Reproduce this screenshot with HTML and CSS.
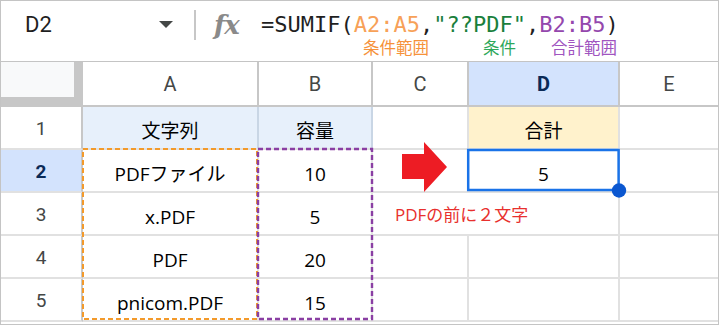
FILE: index.html
```html
<!DOCTYPE html>
<html>
<head>
    <meta charset="utf-8">
    <link rel="stylesheet" href="styles.css">
</head>
<body>
    <div class="sheet">
        <div class="formula-bar">
            <div class="name-box">
                <span class="cell-ref">D2</span>
                <span class="caret"></span>
            </div>
            <div class="divider"></div>
            <div class="fx">fx</div>
            <div class="formula">
                <div class="formula-text">=SUMIF(<span class="ref-a">A2:A5</span>,<span class="crit">"??PDF"</span>,<span class="ref-b">B2:B5</span>)</div>
                <div class="notes">
                    <span class="note note-a">条件範囲</span>
                    <span class="note note-c">条件</span>
                    <span class="note note-b">合計範囲</span>
                </div>
            </div>
        </div>

        <div class="grid">
            <div class="corner"><div class="corner-inner"></div></div>
            <div class="col-head">A</div>
            <div class="col-head">B</div>
            <div class="col-head">C</div>
            <div class="col-head active">D</div>
            <div class="col-head last">E</div>

            <div class="row-head">1</div>
            <div class="cell title">文字列</div>
            <div class="cell title">容量</div>
            <div class="cell"></div>
            <div class="cell total">合計</div>
            <div class="cell last"></div>

            <div class="row-head active">2</div>
            <div class="cell">PDFファイル</div>
            <div class="cell">10</div>
            <div class="cell"></div>
            <div class="cell">5</div>
            <div class="cell last"></div>

            <div class="row-head">3</div>
            <div class="cell">x.PDF</div>
            <div class="cell">5</div>
            <div class="cell note-cell">PDFの前に２文字</div>
            <div class="cell last"></div>

            <div class="row-head">4</div>
            <div class="cell">PDF</div>
            <div class="cell">20</div>
            <div class="cell"></div>
            <div class="cell"></div>
            <div class="cell last"></div>

            <div class="row-head">5</div>
            <div class="cell">pnicom.PDF</div>
            <div class="cell">15</div>
            <div class="cell"></div>
            <div class="cell"></div>
            <div class="cell last"></div>
        </div>

        <!-- range highlights, arrow and selection drawn over the grid -->
        <svg class="overlay" viewBox="0 0 719 325" width="719" height="325">
            <rect x="83" y="149" width="174" height="170" fill="none" stroke="#f39a2b" stroke-width="2" stroke-dasharray="5 3"/>
            <rect x="258" y="149" width="114" height="170" fill="none" stroke="#8a3fa3" stroke-width="2.4" stroke-dasharray="5 3"/>
            <polygon points="402,154 424,154 424,142 447,167 424,192 424,179 402,179" fill="#ed1c24"/>
            <rect x="468.2" y="150" width="150.4" height="40" fill="none" stroke="#1a73e8" stroke-width="2.5"/>
            <circle cx="619" cy="190.5" r="7.2" fill="#0b57d0"/>
        </svg>
    </div>
</body>
</html>
```

FILE: styles.css
```css
* {
    margin: 0;
    padding: 0;
    box-sizing: border-box;
}

body {
    background: #ffffff;
    font-family: "Open Sans", "Noto Sans CJK JP", sans-serif;
    color: #000000;
}

.sheet {
    position: relative;
    width: 719px;
    height: 325px;
    border: 1px solid #c4c4c4;
    overflow: hidden;
}

/* formula bar */
.formula-bar {
    display: flex;
    align-items: flex-start;
    height: 61px;
    padding-top: 12px;
    border-bottom: 1px solid #c4c4c4;
}

.name-box {
    display: flex;
    align-items: flex-start;
    width: 182px;
    padding-left: 24px;
    padding-right: 10px;
}

.cell-ref {
    font-family: Roboto, sans-serif;
    font-size: 22px;
    line-height: 24px;
    color: #1f1f1f;
}

.caret {
    margin-left: auto;
    margin-top: 8px;
    width: 0;
    height: 0;
    border-left: 7px solid transparent;
    border-right: 7px solid transparent;
    border-top: 7px solid #444746;
}

.divider {
    width: 2px;
    height: 30px;
    margin-top: -3px;
    margin-left: 11px;
    background: #c7c7c7;
}

.fx {
    margin-left: 18px;
    width: 30px;
    font-family: "DejaVu Serif", serif;
    font-style: italic;
    font-weight: 700;
    font-size: 26px;
    line-height: 24px;
    color: #8a8a8a;
    letter-spacing: -1px;
}

.formula {
    margin-left: 17px;
}

.formula-text {
    font-family: "DejaVu Sans Mono", monospace;
    font-size: 22px;
    line-height: 22px;
    padding-top: 1px;
    color: #1f1f1f;
    white-space: nowrap;
}

.ref-a {
    color: #f7a158;
}

.crit {
    color: #1a7f3c;
}

.ref-b {
    color: #9447ad;
}

.notes {
    display: flex;
    margin-top: 2px;
    font-family: "Noto Sans CJK JP", sans-serif;
    font-size: 16.5px;
    line-height: 18px;
}

.note-a {
    margin-left: 102px;
    color: #f6923a;
}

.note-c {
    margin-left: 54px;
    color: #2ea85a;
}

.note-b {
    margin-left: 35px;
    color: #a054bf;
}

/* grid */
.grid {
    display: grid;
    grid-template-columns: 82px 176px 114px 96px 151px 1fr;
    grid-template-rows: 45px repeat(5, 43px);
}

.corner {
    background: #c7c7c7;
}

.corner-inner {
    width: 73px;
    height: 35px;
    background: #f8f9fa;
}

.col-head,
.row-head {
    display: flex;
    align-items: center;
    justify-content: center;
    font-family: Roboto, sans-serif;
    font-size: 19px;
    color: #444746;
    background: #ffffff;
    border-right: 2px solid #c7c7c7;
}

.col-head {
    border-bottom: 2px solid #c7c7c7;
    font-size: 20px;
}

.row-head {
    border-bottom: 2px solid #e1e1e1;
    padding-top: 2px;
}

.col-head.active,
.row-head.active {
    background: #d3e3fd;
    color: #0a2a57;
    font-weight: 700;
}

.col-head.last,
.cell.last {
    border-right: none;
}

.cell {
    display: flex;
    align-items: flex-end;
    justify-content: center;
    padding-bottom: 5px;
    font-size: 19px;
    line-height: 24px;
    border-right: 2px solid #e1e1e1;
    border-bottom: 2px solid #e1e1e1;
    white-space: nowrap;
}

.cell.title {
    background: #e7f0fb;
    border-right-color: #c9d6e5;
}

.cell.total {
    background: #fff2cc;
}

.note-cell {
    grid-column: span 2;
    justify-content: flex-start;
    padding-left: 22px;
    padding-bottom: 7px;
    font-size: 17px;
    color: #e8302e;
}

.overlay {
    position: absolute;
    top: -1px;
    left: -1px;
    pointer-events: none;
}
```
